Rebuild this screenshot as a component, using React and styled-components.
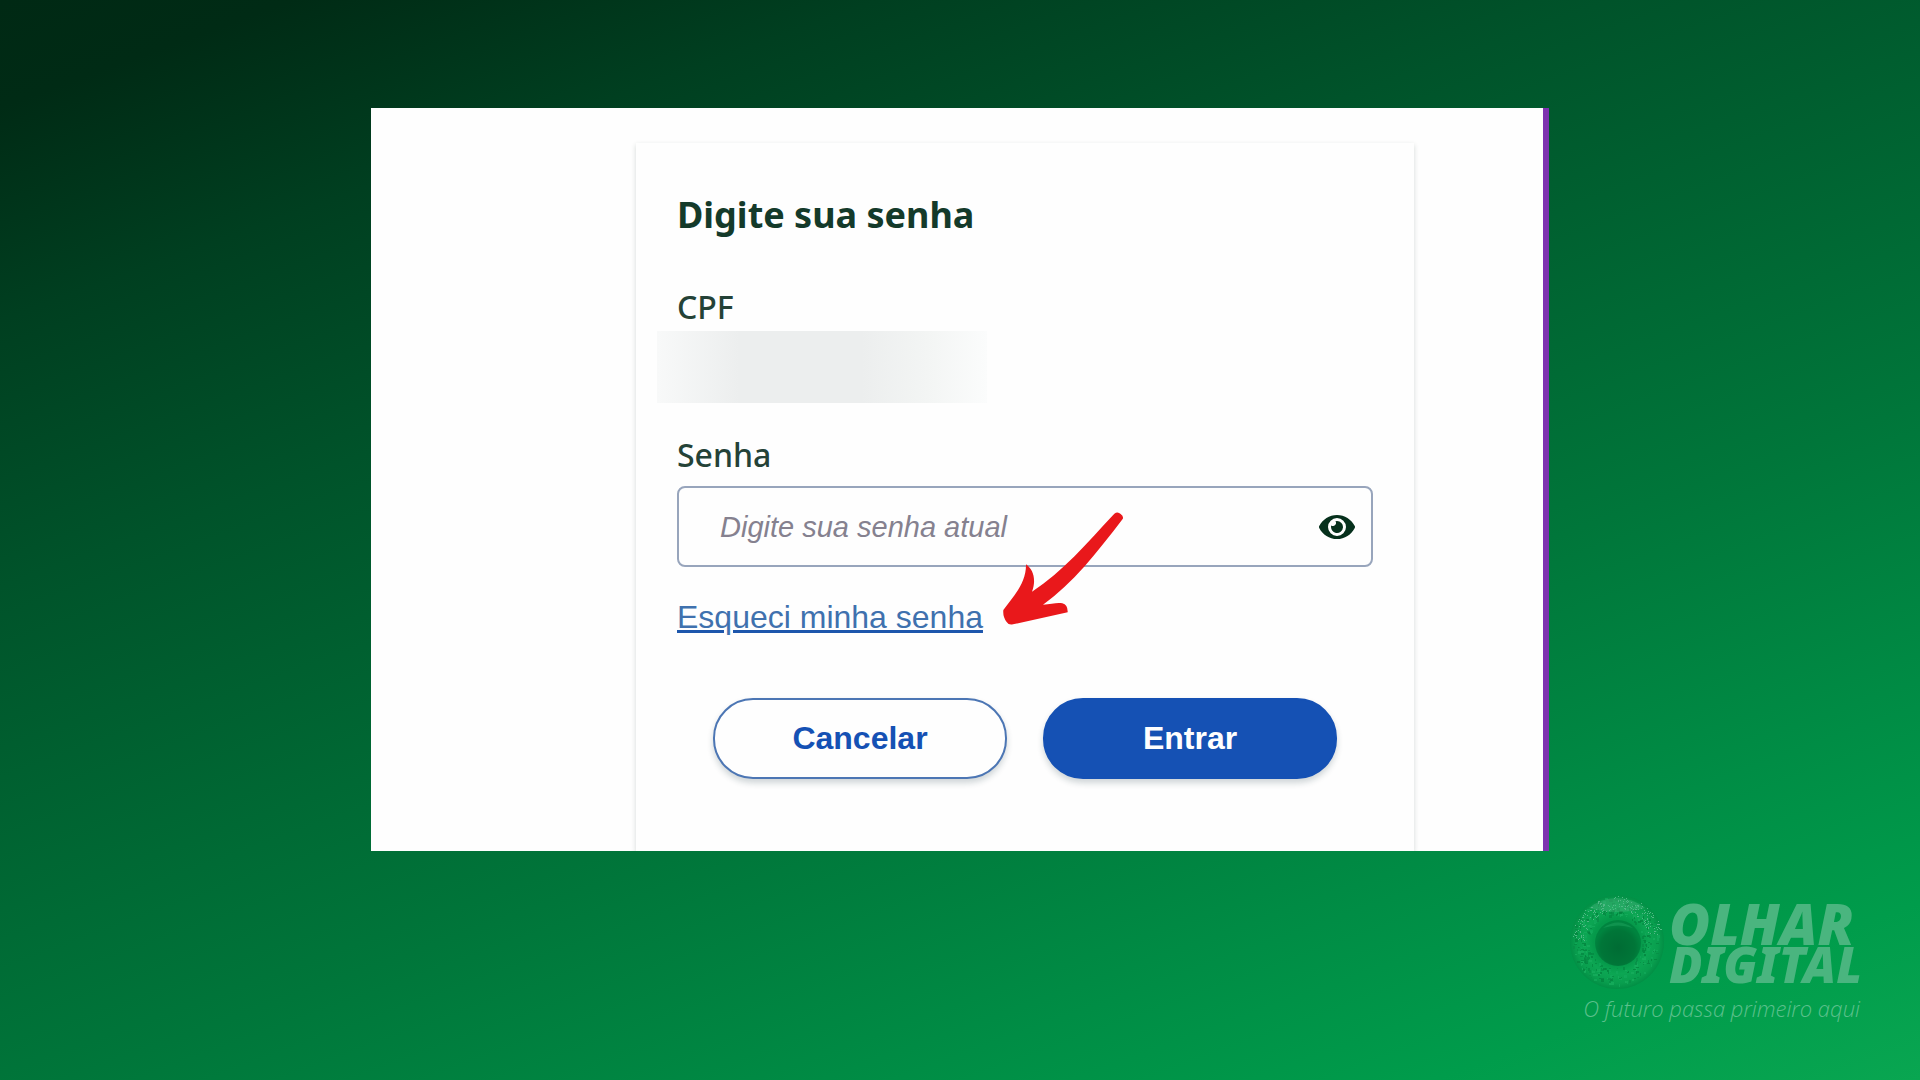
import { useState } from "react";
import styled, { createGlobalStyle } from "styled-components";
import { FaEye } from "react-icons/fa";

const GlobalStyle = createGlobalStyle`
  *, *::before, *::after {
    box-sizing: border-box;
  }

  body {
    margin: 0;
    font-family: "Liberation Sans", Arial, sans-serif;
  }
`;

const Page = styled.div`
  display: flex;
  flex-direction: column;
  align-items: center;
  min-height: 100vh;
  padding-top: 10vh;
  background: linear-gradient(
    160deg,
    #002914 0%,
    #002b15 6%,
    #003f20 18%,
    #00532a 33%,
    #00763a 62%,
    #008d45 79%,
    #009c4b 90%,
    #09a651 100%
  );
`;

const Frame = styled.main`
  display: flex;
  justify-content: center;
  width: 1178px;
  max-width: 100%;
  padding: 35px 0 0 136px;
  border-right: 6px solid #7e33b0;
  background: #fefefe;
`;

const Card = styled.form`
  position: relative;
  display: flex;
  flex-direction: column;
  align-items: flex-start;
  width: 778px;
  padding: 48px 41px 72px;
  box-shadow: 0 2px 5px rgba(20, 50, 40, 0.18);
  clip-path: inset(-6px -6px 0);
`;

const Title = styled.h1`
  margin: 0 0 48px;
  font-family: "Noto Sans", sans-serif;
  font-size: 36px;
  font-weight: 700;
  line-height: 48px;
  color: #143a2a;
`;

const Label = styled.label`
  font-family: "Noto Sans", sans-serif;
  font-size: 32px;
  font-weight: 500;
  line-height: 40px;
  color: #244237;
`;

const HiddenValue = styled.output`
  width: 330px;
  height: 72px;
  margin: 4px 0 32px -20px;
  background: linear-gradient(90deg, #f8f9f9, #eceeee 25%, #eceeee 62%, #f3f5f4 82%, #fbfcfc);
`;

const PasswordBox = styled.div`
  display: flex;
  align-items: center;
  width: 100%;
  height: 81px;
  margin-top: 11px;
  padding: 0 16px 0 41px;
  border: 2px solid #98a5bc;
  border-radius: 8px;
`;

const PasswordInput = styled.input`
  flex: 1;
  min-width: 0;
  padding: 2px 0 0;
  border: 0;
  outline: 0;
  background: transparent;
  font-family: inherit;
  font-size: 29px;
  color: #0b3323;

  &::placeholder {
    font-style: italic;
    color: #85818f;
    opacity: 1;
  }
`;

const EyeButton = styled.button`
  display: flex;
  padding: 0;
  border: 0;
  background: none;
  font-size: 36px;
  color: #06301c;
  cursor: pointer;
`;

const ForgotLink = styled.a`
  margin-top: 32px;
  font-size: 32px;
  line-height: 36px;
  color: #3f71ae;
  text-decoration-color: #1d56ac;
  text-decoration-thickness: 3px;
`;

const Actions = styled.div`
  display: flex;
  justify-content: center;
  gap: 36px;
  width: 100%;
  margin-top: 63px;
`;

const Button = styled.button`
  width: 294px;
  height: 81px;
  border: 2px solid ${({ $primary }) => ($primary ? "#1551b4" : "#4c76b4")};
  border-radius: 40px;
  background: ${({ $primary }) => ($primary ? "#1551b4" : "#fefefe")};
  box-shadow: 0 4px 6px rgba(20, 50, 60, 0.2);
  font-family: inherit;
  font-size: 32px;
  font-weight: 700;
  color: ${({ $primary }) => ($primary ? "#fefefe" : "#1551b4")};
  cursor: pointer;
`;

// lies over the password field and points at the link
const Arrow = styled.svg`
  position: absolute;
  top: 369px;
  left: 367px;
  width: 121px;
  height: 113px;
  pointer-events: none;
`;

const Brand = styled.footer`
  display: flex;
  flex-direction: column;
  align-items: flex-end;
  align-self: flex-end;
  margin-top: 43px;
  padding-right: 58px;
  color: #4ab57f;
`;

const BrandRow = styled.div`
  display: flex;
  align-items: center;
  gap: 4px;
`;

const BrandName = styled.div`
  display: flex;
  flex-direction: column;
  padding-top: 4px;
  font-family: "Noto Sans", sans-serif;
  font-style: italic;
  font-weight: 900;
  line-height: 41px;
`;

const BrandWord = styled.span`
  font-size: ${({ $size }) => $size}px;
`;

const Tagline = styled.p`
  margin: 4px 0 0;
  padding-right: 2px;
  font-family: "Open Sans", sans-serif;
  font-size: 22px;
  font-style: italic;
  font-weight: 300;
  line-height: 28px;
  color: #5cc08c;
`;

// iris texture: small patches scattered between the pupil and the rim
const FLECK_COLORS = ["#048a42", "#16ac5c", "#078f47", "#12a95a", "#03853f"];

const noise = (n) => {
  const value = Math.sin(n * 127.1) * 43758.5453;
  return value - Math.floor(value);
};

const flecks = Array.from({ length: 340 }, (_, i) => {
  const angle = noise(i + 1) * Math.PI * 2;
  const radius = 27 + noise(i + 500) * 17;
  return {
    x: Math.round(46 + radius * Math.cos(angle)),
    y: Math.round(47 + radius * Math.sin(angle)),
    width: 1 + Math.floor(noise(i + 900) * 3),
    height: 1 + Math.floor(noise(i + 1300) * 3),
    color: FLECK_COLORS[i % FLECK_COLORS.length],
  };
});

const glints = Array.from({ length: 200 }, (_, i) => {
  const angle = Math.PI * (1.02 + noise(i + 2000) * 0.92);
  const radius = 32 + noise(i + 3000) * 14;
  return {
    x: Math.round(48 + radius * Math.cos(angle)),
    y: Math.round(48 + radius * Math.sin(angle)),
  };
});

function BrandEye() {
  return (
    <svg width="96" height="96" viewBox="0 0 96 96" aria-hidden="true">
      <defs>
        <radialGradient id="iris">
          <stop offset="50%" stopColor="#05994a" />
          <stop offset="68%" stopColor="#0ca653" />
          <stop offset="88%" stopColor="#099e4e" />
          <stop offset="100%" stopColor="#028f45" />
        </radialGradient>
        <radialGradient id="pupil" cy="60%">
          <stop offset="0%" stopColor="#006c34" />
          <stop offset="75%" stopColor="#007638" />
          <stop offset="100%" stopColor="#00843f" />
        </radialGradient>
      </defs>
      <circle cx="48" cy="48" r="47" fill="url(#iris)" />
      {flecks.map((fleck, i) => (
        <rect
          key={i}
          x={fleck.x}
          y={fleck.y}
          width={fleck.width}
          height={fleck.height}
          fill={fleck.color}
          opacity="0.8"
        />
      ))}
      <path d="M20 14A44 44 0 0 1 76 14Q48 22 20 14Z" fill="#4ab57f" opacity="0.4" />
      {glints.map((glint, i) => (
        <rect key={i} x={glint.x} y={glint.y} width="1" height="1" fill="#4fb985" />
      ))}
      <circle cx="49" cy="49" r="23" fill="url(#pupil)" />
      <path d="M34 34Q49 23 64 34Q49 29 34 34Z" fill="#159a55" opacity="0.7" />
    </svg>
  );
}

function App() {
  const [visible, setVisible] = useState(false);

  return (
    <Page>
      <GlobalStyle />
      <Frame>
        <Card onSubmit={(e) => e.preventDefault()}>
          <Title>Digite sua senha</Title>
          <Label htmlFor="cpf">CPF</Label>
          <HiddenValue id="cpf" />
          <Label htmlFor="senha">Senha</Label>
          <PasswordBox>
            <PasswordInput
              id="senha"
              type={visible ? "text" : "password"}
              placeholder="Digite sua senha atual"
            />
            <EyeButton type="button" aria-label="Mostrar senha" onClick={() => setVisible(!visible)}>
              <FaEye />
            </EyeButton>
          </PasswordBox>
          <ForgotLink href="#senha">Esqueci minha senha</ForgotLink>
          <Actions>
            <Button type="button">Cancelar</Button>
            <Button type="submit" $primary>Entrar</Button>
          </Actions>
          <Arrow viewBox="1030 276 363 339" aria-hidden="true">
            <path
              fill="#e9181b"
              d="M1364 281Q1374 273 1383 282Q1393 290 1389 297C1310 400 1240 490 1150 554C1175 552 1195 546 1208 550Q1225 555 1224 577L1060 613Q1047 616 1041 606Q1029 590 1031 570C1060 530 1100 490 1099 433C1122 450 1130 480 1117 515C1210 455 1280 370 1364 281Z"
            />
          </Arrow>
        </Card>
      </Frame>
      <Brand>
        <BrandRow>
          <BrandEye />
          <BrandName>
            <BrandWord $size={56}>OLHAR</BrandWord>
            <BrandWord $size={49}>DIGITAL</BrandWord>
          </BrandName>
        </BrandRow>
        <Tagline>O futuro passa primeiro aqui</Tagline>
      </Brand>
    </Page>
  );
}

export default App;
